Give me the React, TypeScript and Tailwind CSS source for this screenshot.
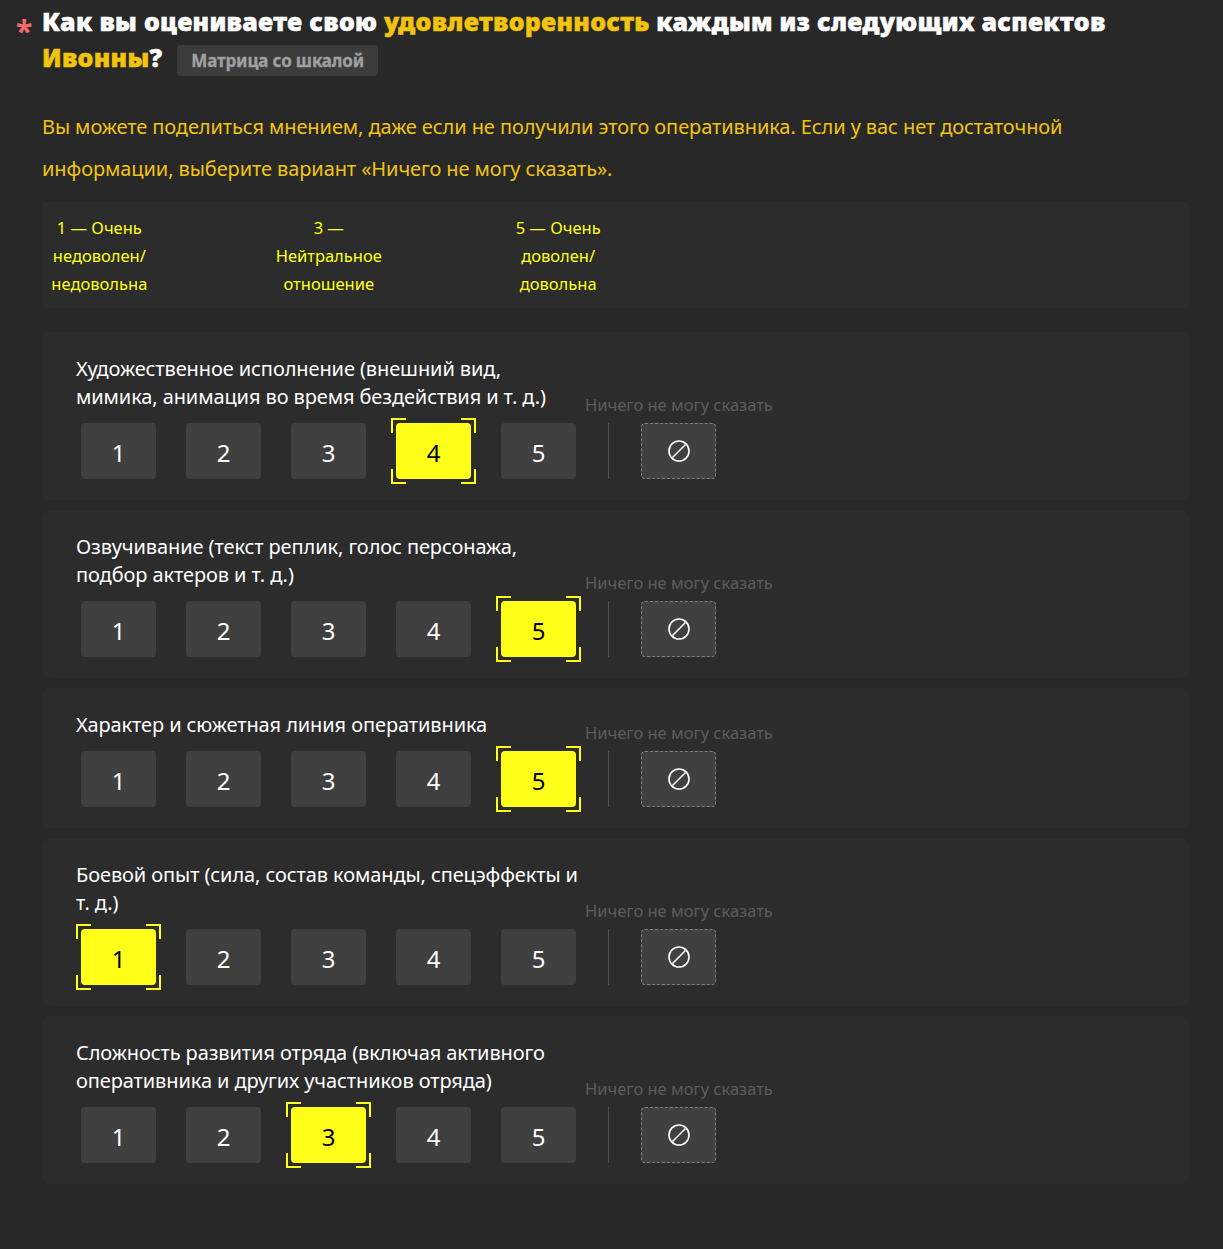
const font = "font-['Noto_Sans','Open_Sans',sans-serif]";

const QUESTIONS = [
  { text: "Художественное исполнение (внешний вид, мимика, анимация во время бездействия и т. д.)", value: 4 },
  { text: "Озвучивание (текст реплик, голос персонажа, подбор актеров и т. д.)", value: 5 },
  { text: "Характер и сюжетная линия оперативника", value: 5 },
  { text: "Боевой опыт (сила, состав команды, спецэффекты и т. д.)", value: 1 },
  { text: "Сложность развития отряда (включая активного оперативника и других участников отряда)", value: 3 },
];

function Corners() {
  return (
    <>
      <span className="absolute -left-[5px] -top-[5px] h-[15px] w-[15px] border-l-2 border-t-2 border-[#ffff19]" />
      <span className="absolute -right-[5px] -top-[5px] h-[15px] w-[15px] border-r-2 border-t-2 border-[#ffff19]" />
      <span className="absolute -bottom-[5px] -left-[5px] h-[15px] w-[15px] border-b-2 border-l-2 border-[#ffff19]" />
      <span className="absolute -bottom-[5px] -right-[5px] h-[15px] w-[15px] border-b-2 border-r-2 border-[#ffff19]" />
    </>
  );
}

function ScoreButton({ n, selected }: { n: number; selected: boolean }) {
  return (
    <div
      className={
        selected
          ? "relative flex h-14 w-[75px] items-center justify-center rounded bg-[#ffff19] pt-1 text-2xl text-black"
          : "flex h-14 w-[75px] items-center justify-center rounded bg-[#404040] pt-1 text-2xl text-white"
      }
    >
      {n}
      {selected && <Corners />}
    </div>
  );
}

function Question({ text, value }: { text: string; value: number }) {
  return (
    <div className="flex items-end rounded-lg bg-[#2c2c2c] pb-[21px] pl-[34px] pt-[23px]">
      <div className="w-[509px]">
        <p className="w-[505px] text-[20px] leading-7 tracking-[-0.1px] text-white">{text}</p>
        <div className="mt-3 flex gap-[30px] pl-[5px]">
          {[1, 2, 3, 4, 5].map((n) => (
            <ScoreButton key={n} n={n} selected={n === value} />
          ))}
        </div>
      </div>
      <div className="w-[188px]">
        <div className="mb-2 whitespace-nowrap text-[16.5px] leading-5 text-[#5c5c5c]">Ничего не могу сказать</div>
        <div className="flex h-14 pl-[23px]">
          <div className="h-14 w-px bg-[#505050]" />
          <div className="ml-8 flex h-14 w-[75px] items-center justify-center rounded border border-dashed border-[#808080] bg-[#404040]">
            <svg width="24" height="24" viewBox="0 0 24 24" fill="none" stroke="#fff" strokeWidth="1.6">
              <circle cx="12" cy="12" r="10" />
              <path d="M5.5 18.5 18.5 5.5" />
            </svg>
          </div>
        </div>
      </div>
    </div>
  );
}

export default function App() {
  return (
    <div className={`min-h-screen bg-[#282828] pb-[65px] pl-4 pr-[34px] pt-[3px] ${font}`}>
      <div className="flex">
        <span className="w-[26px] pt-[10px] text-[30px] font-bold leading-9 text-[#f56c6c]">*</span>
        <h1 className="flex-1 text-[25px] font-black leading-9 tracking-[0.3px] text-white [-webkit-text-stroke:0.5px_currentColor]">
          Как вы оцениваете свою <span className="text-[#f1c40f]">удовлетворенность</span> каждым из следующих аспектов{" "}
          <span className="text-[#f1c40f]">Ивонны</span>?
          <span className="ml-[15px] inline-block rounded-sm bg-[#3c3c3c] px-[14px] align-middle text-[17px] font-bold leading-[31px] tracking-[-0.15px] text-[#a0a0a0] [-webkit-text-stroke:0.3px_currentColor]">
            Матрица со шкалой
          </span>
        </h1>
      </div>
      <div className="pl-[26px]">
        <p className="mt-[30px] text-[20px] leading-[42px] tracking-[-0.09px] text-[#f1c40f]">
          Вы можете поделиться мнением, даже если не получили этого оперативника. Если у вас нет достаточной информации, выберите вариант «Ничего не могу сказать».
        </p>
        <div className="mt-3 grid grid-cols-10 rounded bg-[#2c2c2c] pb-[10px] pt-3 text-center text-[16.5px] leading-7 text-[#ffff19]">
          <div className="col-start-1">1 — Очень<br />недоволен/<br />недовольна</div>
          <div className="col-start-3">3 —<br />Нейтральное<br />отношение</div>
          <div className="col-start-5">5 — Очень<br />доволен/<br />довольна</div>
        </div>
        <div className="mt-6 flex flex-col gap-[10px]">
          {QUESTIONS.map((q) => (
            <Question key={q.text} text={q.text} value={q.value} />
          ))}
        </div>
      </div>
    </div>
  );
}
